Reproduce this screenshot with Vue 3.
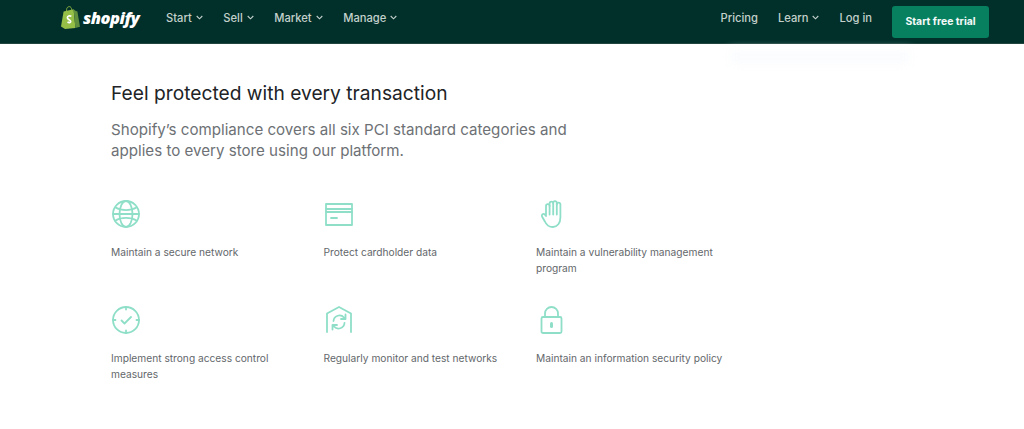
<script setup>
const navLeft = ['Start', 'Sell', 'Market', 'Manage']
const features = [
  { id: 'globe', text: 'Maintain a secure network' },
  { id: 'card', text: 'Protect cardholder data' },
  { id: 'hand', text: 'Maintain a vulnerability management program' },
  { id: 'check', text: 'Implement strong access control measures' },
  { id: 'house', text: 'Regularly monitor and test networks' },
  { id: 'lock', text: 'Maintain an information security policy' }
]
</script>

<template>
  <div class="page">
    <header class="bar">
      <div class="logo">
        <svg class="bag" width="20" height="24" viewBox="0 0 20 24">
          <path d="M1 20.5 3.6 5.6 13.6 3.2 15.4 22 5 23Z" fill="#95bf47" />
          <path d="M15.4 22 20 20.8 17.4 5.4 15.4 4.8 13.6 3.2Z" fill="#5e8e3e" />
          <path d="M6.6 5V3.6C6.6 1.8 8 .6 9.3.6c1.4 0 2.3 1.4 2.3 3.2" fill="none" stroke="#8db040" stroke-width="1" />
          <path d="M11.4 10.2c-2-.8-4-.2-4 1.500 0 2 3.300 2 3.300 3.800 0 1.200-1.700 1.500-3.200.6" fill="none" stroke="#fff" stroke-width="1.700" />
        </svg>
        <span class="word">shopify</span>
      </div>
      <nav class="nav-left">
        <a v-for="item in navLeft" :key="item" class="nav-item">
          {{ item }}
          <svg class="chev" width="7" height="5" viewBox="0 0 7 5"><path d="M.7 1 3.500 3.800 6.300 1" fill="none" stroke="currentColor" stroke-width="1.100" /></svg>
        </a>
      </nav>
      <nav class="nav-right">
        <a class="nav-item">Pricing</a>
        <a class="nav-item">Learn
          <svg class="chev" width="7" height="5" viewBox="0 0 7 5"><path d="M.7 1 3.500 3.800 6.300 1" fill="none" stroke="currentColor" stroke-width="1.100" /></svg>
        </a>
        <a class="nav-item">Log in</a>
        <a class="cta">Start free trial</a>
      </nav>
    </header>

    <div class="glow"></div>

    <main class="main">
      <h2 class="title">Feel protected with every transaction</h2>
      <p class="sub">Shopify’s compliance covers all six PCI standard categories and applies to every store using our platform.</p>
      <ul class="grid">
        <li v-for="f in features" :key="f.id" class="cell">
          <svg class="icon" width="30" height="30" viewBox="0 0 30 30" fill="none" stroke="#8fdfc8" stroke-width="1.800" stroke-linecap="round" stroke-linejoin="round">
            <template v-if="f.id === 'globe'">
              <circle cx="15" cy="15" r="13" />
              <ellipse cx="15" cy="15" rx="6.500" ry="13" />
              <path d="M4.500 8.500C10 12 20 12 25.500 8.500M4.500 21.500C10 18 20 18 25.500 21.500M2 15h26" />
            </template>
            <template v-else-if="f.id === 'card'">
              <rect x="2" y="5" width="26" height="21" />
              <path d="M2 10h26M2 13h26M7 19h6" />
            </template>
            <template v-else-if="f.id === 'hand'">
              <g transform="translate(3 0.500)">
                <path d="M7 16V6.500a1.800 1.800 0 0 1 3.600 0V4a1.800 1.800 0 0 1 3.600 0v-.5a1.800 1.800 0 0 1 3.600 0V5a1.800 1.800 0 0 1 3.600 0v13c0 5.500-3 9.500-7.500 9.500-4.500 0-6.500-2-8-5.500L3 17c-.8-1.800 1.300-3.500 2.800-2L7 16.500" />
                <path d="M10.600 6.500V15M14.200 4V15M17.800 4V15" />
              </g>
            </template>
            <template v-else-if="f.id === 'check'">
              <circle cx="15" cy="15" r="13" />
              <path d="M15 2v2.500M15 25.500V28M2 15h2.500M25.500 15H28M10.500 15.500l3 3 6.500-6.500" />
            </template>
            <template v-else-if="f.id === 'house'">
              <path d="M3 27V8.500L15 2l12 6.500V27" />
              <path d="M9.500 16a6 6 0 0 1 10.500-3.500l1.500 1.500M20.500 18a6 6 0 0 1-10.500 3.500L8.500 20M21.500 9.500V14H17M8.500 24.500V20H13" />
            </template>
            <template v-else>
              <rect x="5.500" y="12" width="20" height="16" rx="1.500" />
              <path d="M9 12V8.500a6.500 6.500 0 0 1 13 0V12" />
              <path d="M15.500 18.500v3" stroke-width="3" />
            </template>
          </svg>
          <p class="label">{{ f.text }}</p>
        </li>
      </ul>
    </main>
  </div>
</template>

<style scoped>
.page {
  position: relative;
  width: 1024px;
  height: 429px;
  overflow: hidden;
  background: #fff;
  font-family: Inter, "Liberation Sans", sans-serif;
}
.bar {
  box-sizing: border-box;
  height: 44px;
  display: flex;
  align-items: center;
  background: #01302a;
  border-bottom: 1px solid #21463f;
  padding: 0 35px 8px 60px;
}
.logo {
  display: flex;
  align-items: center;
  gap: 3px;
  width: 106px;
}
.bag { flex: none; }
.word {
  font-family: "Open Sans", "Liberation Sans", sans-serif;
  font-weight: 800;
  font-style: italic;
  font-size: 16.500px;
  letter-spacing: -0.500px;
  color: #fff;
}
.nav-left, .nav-right {
  display: flex;
  align-items: center;
}
.nav-left { gap: 20.500px; }
.nav-right { gap: 20px; margin-left: auto; }
.nav-item {
  display: inline-flex;
  align-items: center;
  gap: 4px;
  font-size: 11.200px;
  font-weight: 500;
  color: #c4d0cc;
  white-space: nowrap;
}
.cta {
  box-sizing: border-box;
  width: 97px;
  height: 32px;
  margin: 8px 0 0;
  display: flex;
  align-items: center;
  justify-content: center;
  background: #078060;
  border-radius: 3px;
  color: #f4faf8;
  font-size: 10.400px;
  font-weight: 700;
}
.glow {
  position: absolute;
  left: 730px;
  top: 50px;
  width: 180px;
  height: 14px;
  background: #fbfcfe;
  filter: blur(5px);
}
.main {
  position: relative;
  padding: 37px 0 0 111px;
}
.title {
  margin: 0;
  font-size: 19.200px;
  line-height: 24px;
  font-weight: 400;
  color: #212326;
}
.sub {
  margin: 14px 0 0;
  width: 470px;
  font-size: 15.130px;
  line-height: 21px;
  color: #6d7175;
}
.grid {
  list-style: none;
  margin: 38px 0 0;
  padding: 0;
  display: grid;
  grid-template-columns: repeat(3, 212.500px);
  grid-template-rows: 106px 90px;
}
.cell { display: block; }
.icon { display: block; }
.label {
  margin: 15px 0 0;
  width: 195px;
  font-size: 10.200px;
  line-height: 16px;
  color: #63676b;
}
</style>
